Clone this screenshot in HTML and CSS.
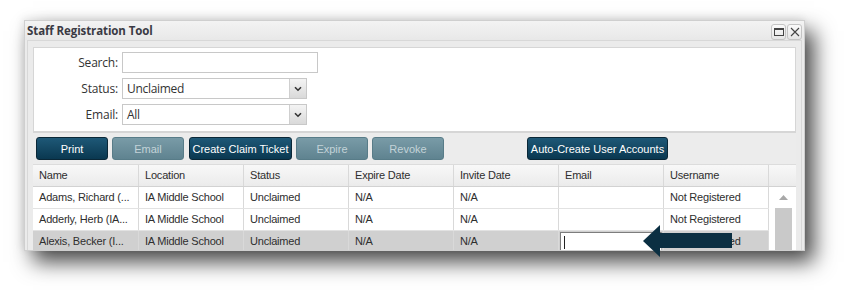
FILE: index.html
```html
<!DOCTYPE html>
<html lang="en">
<head>
    <meta charset="UTF-8">
    <title>Staff Registration Tool</title>
    <link rel="stylesheet" href="styles.css">
</head>
<body>
    <div class="window">
        <div class="titlebar">
            <span class="title">Staff Registration Tool</span>
            <div class="tools">
                <span class="tool">
                    <svg width="10" height="8" viewBox="0 0 10 8"><rect x="0.5" y="0.5" width="9" height="7" fill="none" stroke="#444" stroke-width="1"/><rect x="0.5" y="0.5" width="9" height="1.5" fill="#444"/></svg>
                </span>
                <span class="tool">
                    <svg width="10" height="10" viewBox="0 0 10 10"><path d="M1 1 L9 9 M9 1 L1 9" stroke="#444" stroke-width="1.1" fill="none"/></svg>
                </span>
            </div>
        </div>

        <div class="frame">
            <div class="filters">
                <div class="field">
                    <label for="search">Search:</label>
                    <input type="text" id="search" class="text-input">
                </div>
                <div class="field">
                    <label>Status:</label>
                    <div class="combo">
                        <span class="combo-value">Unclaimed</span>
                        <span class="combo-arrow">
                            <svg width="8" height="6" viewBox="0 0 8 6"><path d="M1 1.2 L4 4.2 L7 1.2" stroke="#333" stroke-width="1.6" fill="none"/></svg>
                        </span>
                    </div>
                </div>
                <div class="field">
                    <label>Email:</label>
                    <div class="combo">
                        <span class="combo-value">All</span>
                        <span class="combo-arrow">
                            <svg width="8" height="6" viewBox="0 0 8 6"><path d="M1 1.2 L4 4.2 L7 1.2" stroke="#333" stroke-width="1.6" fill="none"/></svg>
                        </span>
                    </div>
                </div>
            </div>

            <div class="toolbar">
                <button class="btn btn-print">Print</button>
                <button class="btn btn-small disabled">Email</button>
                <button class="btn btn-claim">Create Claim Ticket</button>
                <button class="btn btn-small disabled">Expire</button>
                <button class="btn btn-small disabled">Revoke</button>
                <button class="btn btn-auto">Auto-Create User Accounts</button>
            </div>

            <div class="grid">
                <div class="grid-head">
                    <div class="cell">Name</div>
                    <div class="cell">Location</div>
                    <div class="cell">Status</div>
                    <div class="cell">Expire Date</div>
                    <div class="cell">Invite Date</div>
                    <div class="cell">Email</div>
                    <div class="cell">Username</div>
                    <div class="cell cell-blank"></div>
                </div>
                <div class="grid-body">
                    <div class="rows">
                        <div class="row">
                            <div class="cell">Adams, Richard (...</div>
                            <div class="cell">IA Middle School</div>
                            <div class="cell">Unclaimed</div>
                            <div class="cell">N/A</div>
                            <div class="cell">N/A</div>
                            <div class="cell"></div>
                            <div class="cell">Not Registered</div>
                        </div>
                        <div class="row">
                            <div class="cell">Adderly, Herb (IA...</div>
                            <div class="cell">IA Middle School</div>
                            <div class="cell">Unclaimed</div>
                            <div class="cell">N/A</div>
                            <div class="cell">N/A</div>
                            <div class="cell"></div>
                            <div class="cell">Not Registered</div>
                        </div>
                        <div class="row selected">
                            <div class="cell">Alexis, Becker (I...</div>
                            <div class="cell">IA Middle School</div>
                            <div class="cell">Unclaimed</div>
                            <div class="cell">N/A</div>
                            <div class="cell">N/A</div>
                            <div class="cell cell-edit"><span class="editor"><span class="caret"></span></span></div>
                            <div class="cell">Not Registered</div>
                        </div>
                    </div>
                    <div class="scroll">
                        <div class="scroll-up">
                            <svg width="9" height="5" viewBox="0 0 9 5"><path d="M0 5 L4.5 0 L9 5 Z" fill="#a8a8a8"/></svg>
                        </div>
                        <div class="scroll-thumb"></div>
                    </div>
                </div>
            </div>
        </div>
    </div>

    <!-- callout arrow over the grid -->
    <svg class="callout" width="90" height="34" viewBox="0 0 90 34">
        <polygon points="0,17 17,1 17,9 89,9 89,24 17,24 17,33" fill="#0b2f42"/>
    </svg>
</body>
</html>
```

FILE: styles.css
```css
body {
    margin: 0;
    width: 853px;
    height: 290px;
    overflow: hidden;
    background-color: #ffffff;
    position: relative;
    font-family: "Liberation Sans", Arial, sans-serif;
}

.window {
    margin: 20px 0 0 24px;
    width: 781px;
    height: 231px;
    box-sizing: border-box;
    border: 1px solid #cfcfcf;
    background-color: #ebebeb;
    overflow: hidden;
    box-shadow: 9px 11px 20px rgba(0, 0, 0, 0.72), -2px -2px 8px rgba(0, 0, 0, 0.08);
}

.titlebar {
    height: 19px;
    display: flex;
    align-items: center;
    justify-content: space-between;
    padding: 0 2px 0 2px;
    background: linear-gradient(#f3f3f3, #e8e8e8);
}

.title {
    font-family: "Open Sans", "DejaVu Sans", sans-serif;
    font-weight: bold;
    font-size: 11.5px;
    letter-spacing: -0.1px;
    color: #3a3a44;
    margin-top: -1px;
}

.tools {
    display: flex;
    gap: 1px;
    margin-top: 2px;
}

.tool {
    width: 13px;
    height: 14px;
    display: flex;
    align-items: center;
    justify-content: center;
    border: 1px solid #c4c4c4;
    border-radius: 3px;
    background: linear-gradient(#fafafa, #e6e6e6);
}

.frame {
    margin: 0 2px;
    height: 212px;
    border-left: 1px solid #d8d8d8;
    border-right: 1px solid #d8d8d8;
    border-top: 1px solid #d8d8d8;
    padding: 6px 5px 0 5px;
    background-color: #ebebeb;
}

.filters {
    background-color: #ffffff;
    border: 1px solid #d6d6d6;
    height: 79px;
    padding-top: 4px;
    display: flex;
    flex-direction: column;
    gap: 5px;
}

.field {
    display: flex;
    align-items: center;
    gap: 4px;
}

.field label {
    width: 84px;
    text-align: right;
    font-family: "Open Sans", "DejaVu Sans", sans-serif;
    font-size: 12px;
    letter-spacing: -0.2px;
    color: #333333;
}

.text-input {
    width: 196px;
    height: 21px;
    box-sizing: border-box;
    margin: 0;
    border: 1px solid #c8c8c8;
    background-color: #ffffff;
}

.combo {
    width: 185px;
    height: 21px;
    box-sizing: border-box;
    border: 1px solid #c8c8c8;
    display: flex;
    align-items: center;
    justify-content: space-between;
}

.combo-value {
    padding-left: 4px;
    font-family: "Open Sans", "DejaVu Sans", sans-serif;
    font-size: 12px;
    letter-spacing: -0.3px;
    color: #333333;
}

.combo-arrow {
    width: 16px;
    height: 19px;
    display: flex;
    align-items: center;
    justify-content: center;
    border-left: 1px solid #cfcfcf;
    background: linear-gradient(#f4f4f4, #d9d9d9);
}

.toolbar {
    height: 32px;
    box-sizing: border-box;
    border-top: 1px solid #d6d6d6;
    padding: 4px 3px 0 3px;
    display: flex;
    gap: 4px;
    background-color: #ececec;
}

.btn {
    height: 23px;
    margin: 0;
    padding: 0;
    border: 1px solid #0a2737;
    border-radius: 3px;
    background: linear-gradient(#1e5877, #0a3850);
    color: #ffffff;
    font-family: "Liberation Sans", Arial, sans-serif;
    font-size: 11px;
}

.btn.disabled {
    border-color: #587c88;
    background: linear-gradient(#799ba7, #5f8390);
    color: #c3d3d8;
}

.btn-print,
.btn-small {
    width: 72px;
}

.btn-claim {
    width: 103px;
    margin-left: 1px;
}

.btn-auto {
    width: 141px;
    margin-left: 79px;
}

.grid {
    background-color: #ffffff;
}

.grid-head {
    display: flex;
    height: 23px;
    box-sizing: border-box;
    border-top: 1px solid #dcdcdc;
    border-bottom: 1px solid #d2d2d2;
    background: linear-gradient(#f8f8f8, #ebebeb);
}

.grid-head .cell {
    height: 21px;
    line-height: 21px;
}

.cell {
    width: 105px;
    box-sizing: border-box;
    padding-left: 6px;
    border-right: 1px solid #d9d9d9;
    font-size: 11px;
    letter-spacing: -0.2px;
    color: #2e2e2e;
    white-space: nowrap;
    overflow: hidden;
}

.grid-head .cell:first-child,
.row .cell:first-child {
    width: 106px;
}

.cell-blank {
    width: 25px;
    border-right: none;
}

.grid-body {
    display: flex;
}

.rows {
    width: 736px;
}

.row {
    display: flex;
    height: 21px;
    border-bottom: 1px solid #e2e2e2;
}

.row .cell {
    height: 21px;
    line-height: 21px;
}

.row.selected {
    background-color: #d0d0d0;
}

.cell-edit {
    padding: 1px 0 0 1px;
}

.editor {
    display: block;
    width: 102px;
    height: 19px;
    box-sizing: border-box;
    border: 1px solid #7d7d7d;
    border-right-color: #b8b8b8;
    border-bottom-color: #b8b8b8;
    background-color: #ffffff;
    padding: 3px 0 0 3px;
}

.caret {
    display: block;
    width: 1px;
    height: 13px;
    background-color: #222222;
}

.scroll {
    width: 25px;
    box-sizing: border-box;
    padding: 0 2px 0 6px;
}

.scroll-up {
    height: 21px;
    display: flex;
    align-items: center;
    justify-content: center;
}

.scroll-thumb {
    height: 60px;
    background-color: #c9c9c9;
}

.callout {
    position: absolute;
    left: 643px;
    top: 224px;
}
```
